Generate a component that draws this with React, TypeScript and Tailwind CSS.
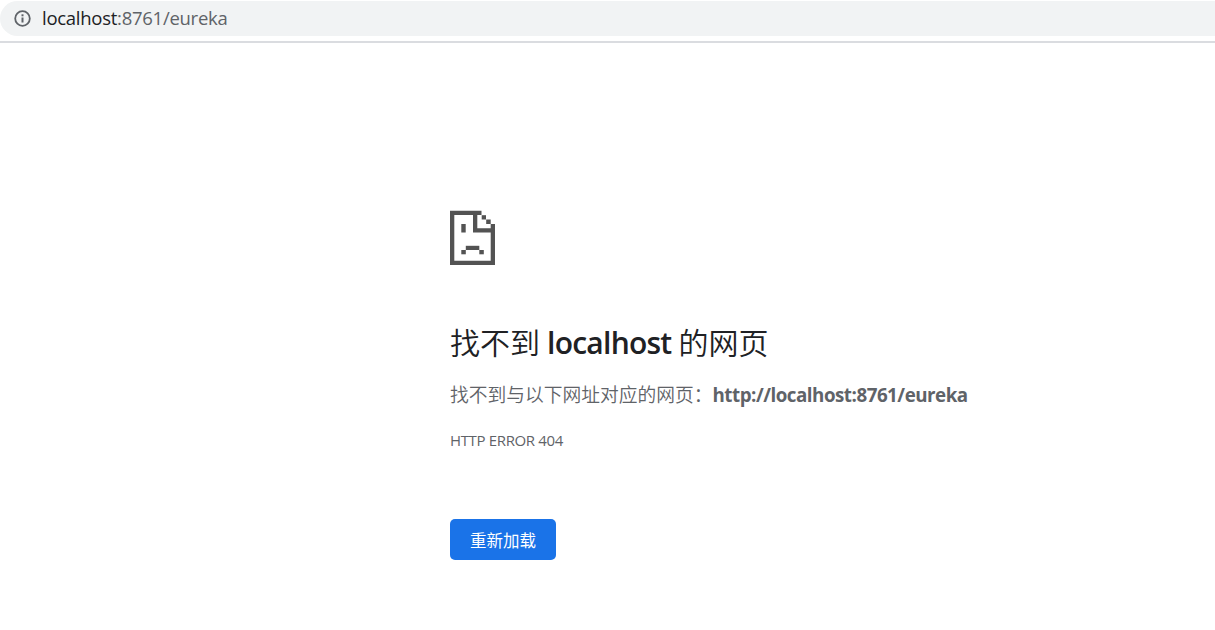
import React from 'react';

function InfoIcon() {
  return (
    <svg className="h-[17px] w-[17px]" viewBox="0 0 17 17" fill="none">
      <circle cx="8.5" cy="8.5" r="7.3" stroke="#5f6368" strokeWidth="1.8" />
      <rect x="7.5" y="7.5" width="2" height="5" fill="#5f6368" />
      <rect x="7.5" y="4.3" width="2" height="2" fill="#5f6368" />
    </svg>
  );
}

function SadPageIcon() {
  return (
    <svg className="h-[55px] w-[45px]" viewBox="0 0 45 55" fill="#535353">
      <path d="M0 .7H31.5V5H27.3V18.2H40.7V14H45V55H0ZM4.3 5V50.7H40.7V22.5H23V5Z" fillRule="evenodd" />
      <rect x="31.7" y="5.2" width="4.3" height="4.3" />
      <rect x="36.2" y="9.5" width="4.5" height="4.5" />
      <rect x="11.3" y="14" width="4.4" height="8.5" />
      <rect x="15.8" y="35.8" width="13.5" height="4.2" />
      <rect x="11.3" y="40" width="4.5" height="4.3" />
      <rect x="29.3" y="40" width="4.5" height="4.3" />
    </svg>
  );
}

function AddressBar() {
  return (
    <header className="h-[43px] border-b-2 border-[#dadce0] pt-px">
      <div className="flex h-[35px] items-center rounded-l-full bg-[#f1f3f4] pl-[14px]">
        <InfoIcon />
        <span className="ml-[11px] pb-px text-[18.5px] leading-[18px] tracking-[-0.27px] whitespace-nowrap text-[#5f6368]">
          <span className="text-[#202124]">localhost</span>:8761/eureka
        </span>
      </div>
    </header>
  );
}

export default function App() {
  return (
    <div className="h-[630px] w-full overflow-hidden bg-white font-['Open_Sans','Noto_Sans_CJK_SC',sans-serif] text-[#5f6368]">
      <AddressBar />
      <main className="ml-[450px] pt-[167px]">
        <SadPageIcon />
        <h1 className="mt-[60px] h-9 text-[30px] leading-9 whitespace-nowrap text-[#202124]">
          <span className="font-[350]">找不到</span>
          <span className="font-semibold tracking-[-0.75px]"> localhost </span>
          <span className="font-[350]">的网页</span>
        </h1>
        <p className="mt-5 h-7 text-[18.75px] leading-7 font-[350] whitespace-nowrap">
          找不到与以下网址对应的网页：<strong className="font-bold tracking-[-0.48px]">http://localhost:8761/eureka</strong>
        </p>
        <div className="mt-[21px] h-5 text-[15px] leading-5 tracking-[-0.35px] whitespace-nowrap">HTTP ERROR 404</div>
        <button className="mt-[69px] flex h-[41px] w-[106px] items-center justify-center rounded-[5px] bg-[#1a73e8] pt-[3px] text-[16.5px] leading-none text-white">
          重新加载
        </button>
      </main>
    </div>
  );
}
